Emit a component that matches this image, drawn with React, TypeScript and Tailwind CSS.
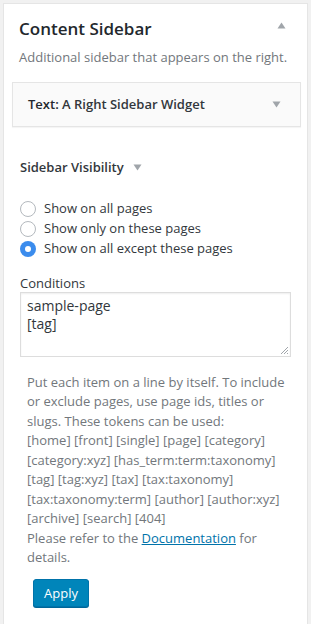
import React from "react";

const Triangle = ({ up = false, className = "" }: { up?: boolean; className?: string }) => (
  <svg width="9" height="7" viewBox="0 0 9 7" className={className}>
    {up ? <path d="M4.5 0.5 L8.5 6.5 L0.5 6.5 Z" fill="#a0a5aa" /> : <path d="M0.5 0.5 L8.5 0.5 L4.5 6.5 Z" fill="#a0a5aa" />}
  </svg>
);

const Radio = ({ label, checked = false }: { label: string; checked?: boolean }) => (
  <label className="flex items-center h-5 gap-[8px]">
    {checked ? (
      <span className="w-4 h-4 rounded-full bg-[#3b8ced] flex items-center justify-center">
        <span className="w-[6px] h-[6px] rounded-full bg-white"></span>
      </span>
    ) : (
      <span className="w-4 h-4 rounded-full border border-[#b4b9be] bg-white"></span>
    )}
    <span className="text-[13px] text-[#32373c]">{label}</span>
  </label>
);

const App = () => {
  const options = ["Show on all pages", "Show only on these pages", "Show on all except these pages"];
  return (
    <div
      className="min-h-screen bg-[#f1f1f1] pt-[3px] pl-[3px]"
      style={{ fontFamily: '"Open Sans", "Noto Sans", sans-serif' }}
    >
      <div className="w-[305px] min-h-[640px] bg-white border border-[#e5e5e5]">
        <div className="flex items-start justify-between pl-[15px] pr-[21px] pt-[13px]">
          <h2 className="text-[17px] leading-[24px] font-semibold text-[#23282d]">Content Sidebar</h2>
          <Triangle up className="mt-[5px]" />
        </div>
        <p className="pl-[15px] mt-[7px] text-[13px] leading-[18px] text-[#72777c]">
          Additional sidebar that appears on the right.
        </p>

        <div className="ml-[8px] mt-[16px] w-[289px] h-[45px] bg-[#fafafa] border border-[#e5e5e5] shadow-[0_1px_1px_rgba(0,0,0,0.04)] flex items-center justify-between pl-[15px] pr-[19px]">
          <span className="text-[13px] font-semibold text-[#32373c]">
            <span className="text-[#23282d]">Text:</span> A Right Sidebar Widget
          </span>
          <Triangle />
        </div>

        <div className="pl-[16px] pr-[15px]">
          <div className="mt-[31px] flex items-center gap-[9px]">
            <span className="text-[13px] font-semibold text-[#32373c]">Sidebar Visibility</span>
            <Triangle />
          </div>

          <div className="mt-[21px] flex flex-col">
            {options.map((o, i) => (
              <Radio key={i} label={o} checked={i === 2} />
            ))}
          </div>

          <div className="mt-[15px] text-[13px] leading-[18px] text-[#32373c]">Conditions</div>
          <div className="relative w-[271px] h-[65px] border border-[#dddddd] shadow-[inset_0_1px_2px_rgba(0,0,0,0.07)] px-[6px] pt-[4px]">
            <div className="text-[14px] leading-[18px] text-[#32373c]">
              sample-page
              <br />
              [tag]
            </div>
            <svg width="9" height="9" viewBox="0 0 9 9" className="absolute right-[1px] bottom-[1px]">
              <path d="M8 1 L1 8 M8 4 L4 8 M8 7 L7 8" stroke="#a0a5aa" strokeWidth="1" />
            </svg>
          </div>

          <div className="pl-[7px] mt-[16px] text-[13px] leading-[19.5px] text-[#72777c]">
            <p>
              Put each item on a line by itself. To include or exclude pages, use page ids, titles or
              slugs. These tokens can be used:
            </p>
            <p>
              [home] [front] [single] [page] [category] [category:xyz] [has_term:term:taxonomy] [tag]
              [tag:xyz] [tax] [tax:taxonomy] [tax:taxonomy:term] [author] [author:xyz] [archive]
              [search] [404]
            </p>
            <p>
              Please refer to the{" "}
              <a className="text-[#0073aa] underline">Documentation</a> for details.
            </p>
          </div>

          <button className="ml-[13px] mt-[11px] h-[28px] px-[10px] rounded-[3px] bg-[#0085ba] border border-[#0073aa] shadow-[0_1px_0_#006799] text-white text-[13px] leading-[26px]">
            Apply
          </button>
        </div>
      </div>
    </div>
  );
};

export default App;
